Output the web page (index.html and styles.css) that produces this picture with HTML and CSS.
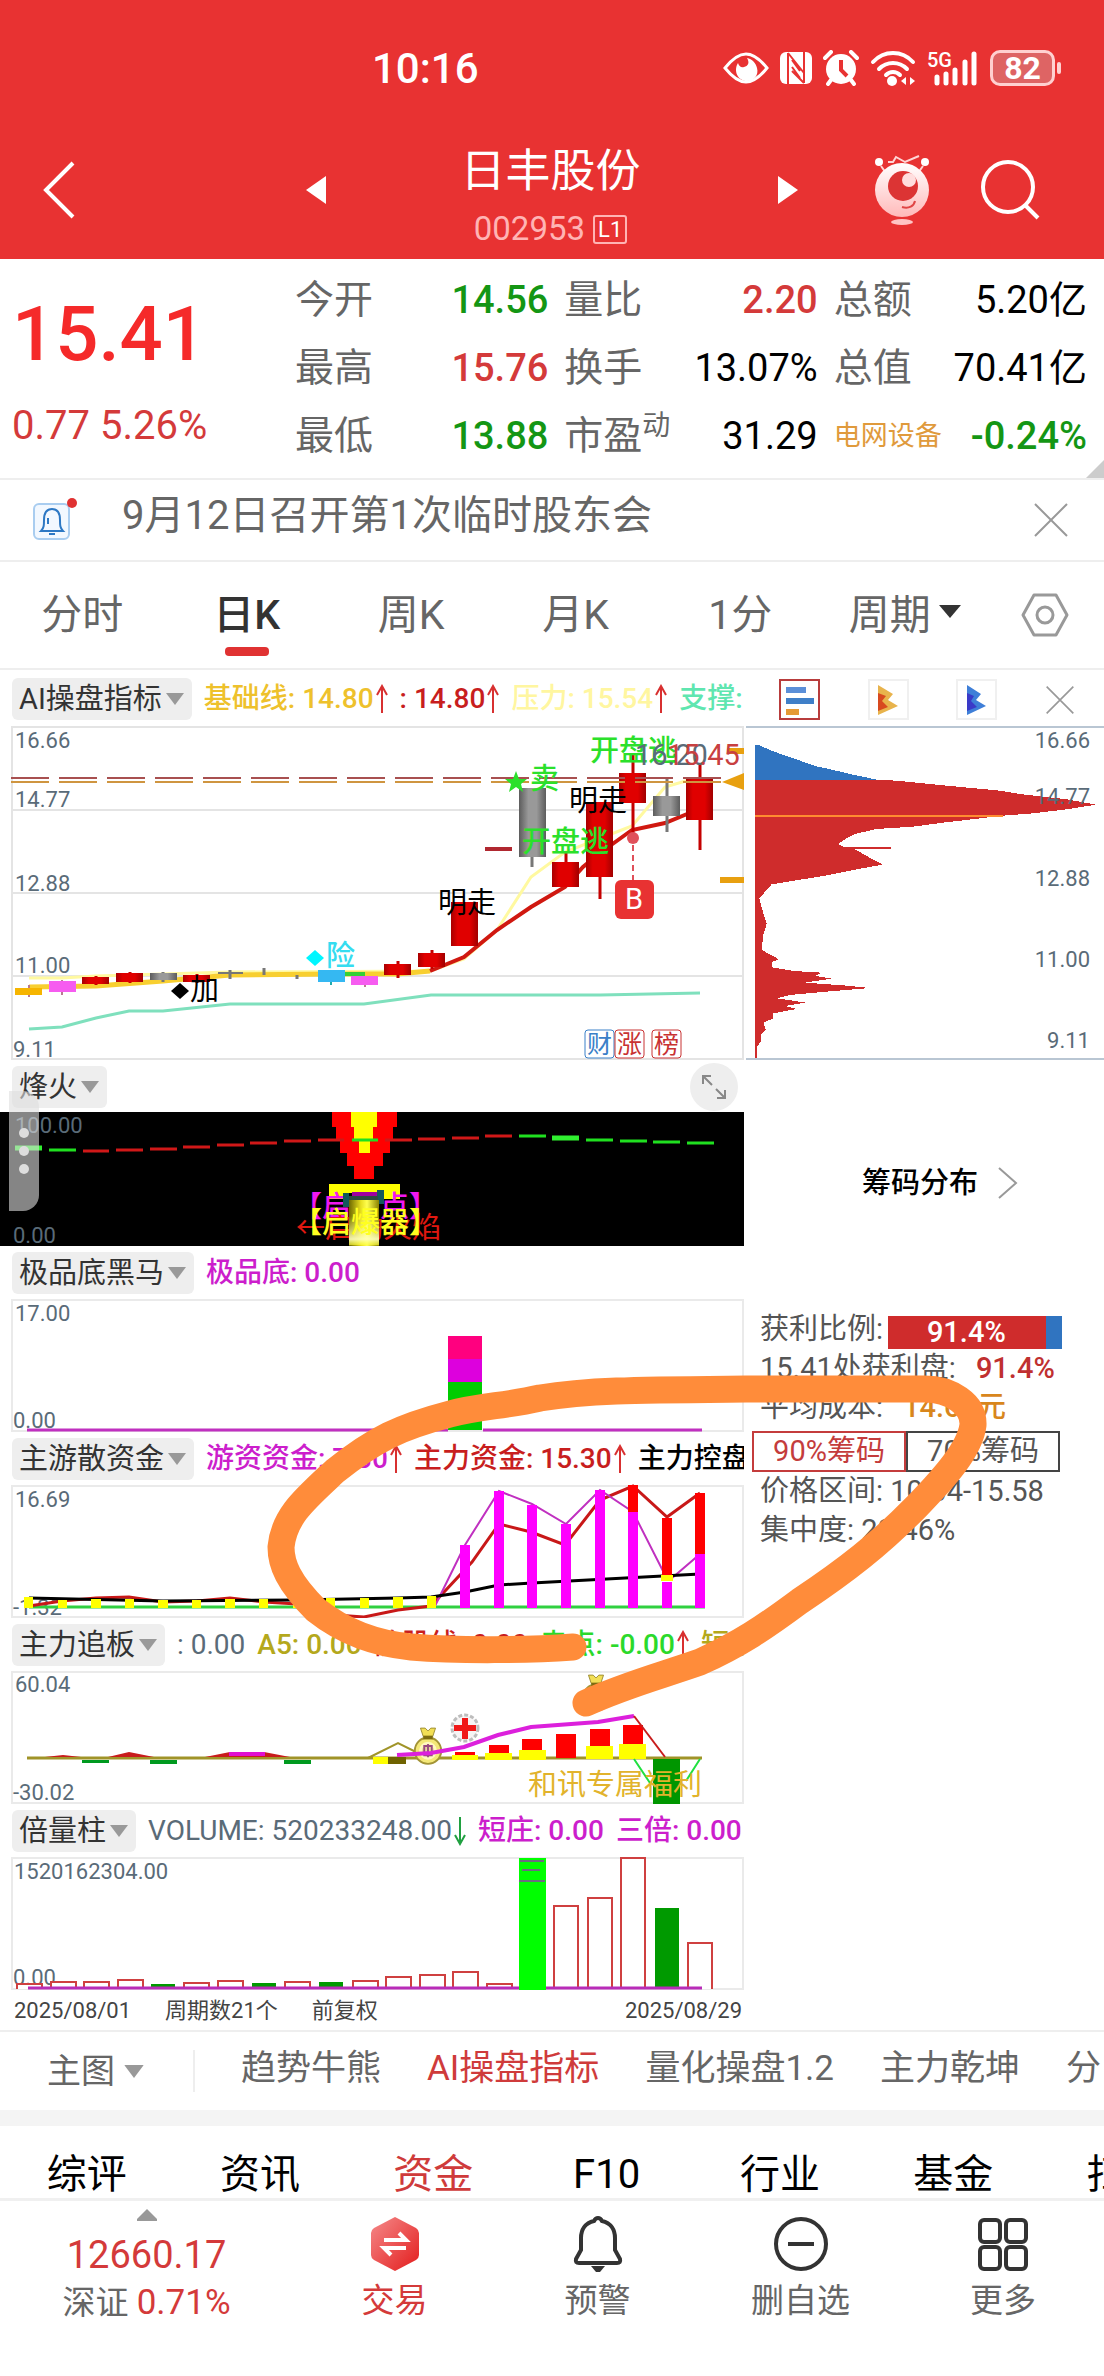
FILE: index.html
```html
<!DOCTYPE html>
<html lang="zh-CN">
<head>
<meta charset="utf-8">
<meta name="viewport" content="width=device-width, initial-scale=1">
<title>日丰股份 002953</title>
<link rel="stylesheet" href="styles.css">
</head>
<body>
<svg class="defs" aria-hidden="true">
  <defs>
    <linearGradient id="redBody"><stop offset="0" stop-color="#a80000"/><stop offset=".25" stop-color="#e00000"/><stop offset=".7" stop-color="#e00000"/><stop offset="1" stop-color="#a00000"/></linearGradient>
    <linearGradient id="greyBody"><stop offset="0" stop-color="#5c5c5c"/><stop offset=".35" stop-color="#999"/><stop offset=".65" stop-color="#999"/><stop offset="1" stop-color="#5c5c5c"/></linearGradient>
    <linearGradient id="rocket"><stop offset="0" stop-color="#6e6800"/><stop offset=".4" stop-color="#e8e020"/><stop offset=".6" stop-color="#ffff50"/><stop offset="1" stop-color="#8a8200"/></linearGradient>
    <linearGradient id="glow" x1="0" y1="0" x2="0" y2="1"><stop offset="0" stop-color="#ffff80" stop-opacity="0"/><stop offset=".8" stop-color="#ffffc0" stop-opacity=".9"/><stop offset="1" stop-color="#ffff40" stop-opacity=".6"/></linearGradient>
    <linearGradient id="tradeFill" x1="0" y1="0" x2="1" y2="1"><stop offset="0" stop-color="#f58a8a"/><stop offset="1" stop-color="#e31c1c"/></linearGradient>
    <linearGradient id="robotFill" x1="0" y1="0" x2="0" y2="1"><stop offset="0" stop-color="#fff"/><stop offset="1" stop-color="#ffb9b9"/></linearGradient>
    <symbol id="up" viewBox="0 0 12 30"><path d="M6 29V2M1 11 6 2l5 9" fill="none" stroke="currentColor" stroke-width="2"/></symbol>
    <symbol id="down" viewBox="0 0 12 30"><path d="M6 1v27M1 19l5 9 5-9" fill="none" stroke="currentColor" stroke-width="2"/></symbol>
    <symbol id="caret" viewBox="0 0 18 12"><path d="M0 0h18L9 12z" fill="currentColor"/></symbol>
    <symbol id="cross" viewBox="0 0 36 36"><path d="M2 2l32 32M34 2 2 34" fill="none" stroke="currentColor" stroke-width="2"/></symbol>
    <symbol id="bag" viewBox="0 0 34 40">
      <path d="M9 1h5l3 3 3-3h5l-3 9H12z" fill="#f2df55" stroke="#9a8a30"/>
      <circle cx="17" cy="25" r="14" fill="#f4e878" stroke="#a39436" stroke-width="2"/>
      <circle cx="17" cy="25" r="8" fill="#e8d9a0" stroke="#fff8c0" stroke-width="3"/>
      <path d="M12 9h10v4H12z" fill="#7d6c10"/>
      <path d="M13 20h8v10h-8zM17 18v14" fill="none" stroke="#9a4a80" stroke-width="2"/>
    </symbol>
  </defs>
</svg>

<header class="top">
  <div class="status">
    <time class="clock">10:16</time>
    <div class="status-icons">
      <svg width="46" height="36" viewBox="0 0 46 36" role="img" aria-label="护眼"><path d="M2 18C10 8 16 4 23 4s13 4 21 14C36 28 30 32 23 32S10 28 2 18z" fill="none" stroke="#fff" stroke-width="3"/><path d="M24 8c3 5 1 8-3 9-3 1-5-1-6-4-5 8 0 18 9 18 7 0 12-6 10-13-1-5-5-9-10-10z" fill="#fff"/></svg>
      <svg width="32" height="34" viewBox="0 0 32 34" role="img" aria-label="NFC"><rect y="1" width="32" height="32" rx="6" fill="#fff"/><path d="M8 2v31M24 1v31M12 9l8 11M12 16l8 11M8 2l16 20M12 20l12 12" fill="none" stroke="#e83232" stroke-width="2"/></svg>
      <svg width="36" height="36" viewBox="0 0 36 36" role="img" aria-label="闹钟"><circle cx="18" cy="19" r="15" fill="#fff"/><path d="M2 8l6-6M34 8l-6-6M8 30l-3 4M28 30l3 4" stroke="#fff" stroke-width="4" stroke-linecap="round"/><path d="M18 10v10l6 6" fill="none" stroke="#e83232" stroke-width="4"/></svg>
      <svg width="46" height="36" viewBox="0 0 46 36" role="img" aria-label="无线网络"><g fill="none" stroke="#fff" stroke-width="4" stroke-linecap="round"><path d="M3 12C14 0 32 0 43 12M9 19c8-8 20-8 28 0M16 25c4-4 10-4 14 0"/></g><circle cx="22" cy="31" r="5" fill="#fff"/><path d="M31 31l5-4v8zM45 31l-5-4v8z" fill="#fff"/></svg>
      <svg width="52" height="36" viewBox="0 0 52 36" role="img" aria-label="5G 信号"><text x="0" y="17" class="net">5G</text><path d="M10 33v-6M19 33v-9M28 33V20M38 33V12M47 33V4" stroke="#fff" stroke-width="5" stroke-linecap="round"/></svg>
      <span class="battery">82</span>
    </div>
  </div>
  <div class="titlebar">
    <button class="icon-btn" aria-label="返回"><svg width="32" height="58" viewBox="0 0 32 58"><path d="M30 2 3 29l27 27" fill="none" stroke="#fff" stroke-width="4"/></svg></button>
    <button class="icon-btn prev" aria-label="上一只"><svg width="20" height="28" viewBox="0 0 20 28"><path d="M20 0v28L0 14z" fill="#fff"/></svg></button>
    <div class="name">
      <h1>日丰股份</h1>
      <p>002953<span class="level">L1</span></p>
    </div>
    <button class="icon-btn next" aria-label="下一只"><svg width="20" height="28" viewBox="0 0 20 28"><path d="M0 0v28l20-14z" fill="#fff"/></svg></button>
    <button class="icon-btn robot" aria-label="助手"><svg width="58" height="72" viewBox="0 0 58 72"><path d="M8 12l5 7M50 12l-5 7M15 8h5l3-5 9 5 14-6" fill="none" stroke="#ffd5d5" stroke-width="2"/><circle cx="6" cy="8" r="4" fill="#fff"/><circle cx="52" cy="8" r="4" fill="#fff"/><circle cx="29" cy="36" r="27" fill="url(#robotFill)"/><circle cx="30" cy="32" r="15" fill="#dc3434"/><circle cx="36" cy="26" r="7" fill="#ffdede"/><path d="M29 53c7 2 12-1 13-6" fill="none" stroke="#e04545" stroke-width="2"/><ellipse cx="29" cy="68" rx="11" ry="3" fill="#ffc4c4"/></svg></button>
    <button class="icon-btn search" aria-label="搜索"><svg width="60" height="60" viewBox="0 0 60 60"><circle cx="27" cy="27" r="25" fill="none" stroke="#fff" stroke-width="4"/><path d="M44 45l13 13" stroke="#fff" stroke-width="4"/></svg></button>
  </div>
</header>

<main>
<section class="quote">
  <div class="price">
    <strong>15.41</strong>
    <span>0.77 5.26%</span>
  </div>
  <dl class="facts">
    <div><dt>今开</dt><dd class="down">14.56</dd></div>
    <div><dt>量比</dt><dd class="up">2.20</dd></div>
    <div><dt>总额</dt><dd>5.20亿</dd></div>
    <div><dt>最高</dt><dd class="up">15.76</dd></div>
    <div><dt>换手</dt><dd>13.07%</dd></div>
    <div><dt>总值</dt><dd>70.41亿</dd></div>
    <div><dt>最低</dt><dd class="down">13.88</dd></div>
    <div><dt>市盈<sup>动</sup></dt><dd>31.29</dd></div>
    <div><dt class="sector">电网设备</dt><dd class="down">-0.24%</dd></div>
  </dl>
</section>

<section class="notice">
  <svg width="44" height="44" viewBox="0 0 44 44" aria-hidden="true"><rect x="1" y="6" width="35" height="35" rx="5" fill="#f2f8ff" stroke="#a9cdf0" stroke-width="2"/><path d="M8 33c3-3 3-6 3-11 0-7 3-11 8-11s8 4 8 11c0 5 0 8 3 11zM16 36h6" fill="none" stroke="#2d78c4" stroke-width="2"/><path d="M15 20v6" stroke="#2d78c4" stroke-width="2"/><circle cx="39" cy="5" r="5" fill="#e03232"/></svg>
  <a href="#notice">9月12日召开第1次临时股东会</a>
  <button class="icon-btn grey" aria-label="关闭公告"><svg width="36" height="36"><use href="#cross"/></svg></button>
</section>

<nav class="periods" aria-label="周期">
  <button>分时</button>
  <button class="active">日K</button>
  <button>周K</button>
  <button>月K</button>
  <button>1分</button>
  <button>周期<svg class="dark" width="22" height="13" viewBox="0 0 18 12" preserveAspectRatio="none"><use href="#caret"/></svg></button>
  <button class="settings" aria-label="设置"><svg width="48" height="44" viewBox="0 0 48 44"><path d="M13 2h22l11 20-11 20H13L2 22z" fill="none" stroke="#999" stroke-width="3" stroke-linejoin="round"/><circle cx="24" cy="22" r="8" fill="none" stroke="#999" stroke-width="3"/></svg></button>
</nav>

<section class="charts">
<div class="panels">
  <div class="legend first">
    <button class="pill">AI操盘指标<svg width="18" height="12"><use href="#caret"/></svg></button>
    <span class="gold">基础线: 14.80<svg class="red"><use href="#up"/></svg></span>
    <span class="crimson">: 14.80<svg class="red"><use href="#up"/></svg></span>
    <span class="pale">压力: 15.54<svg class="red"><use href="#up"/></svg></span>
    <span class="mint">支撑:</span>
  </div>
  <svg class="plot" viewBox="0 724 744 336" role="img" aria-label="日K线">
    <path d="M12 727h731v332H12zM12 810h731M12 893h731M12 976h731" fill="none" stroke="#e4e4e4" stroke-width="2"/>
    <g class="axis"><text x="15" y="748">16.66</text><text x="15" y="807">14.77</text><text x="15" y="891">12.88</text><text x="15" y="973">11.00</text><text x="13" y="1057">9.11</text></g>
    <path d="M29 1029 62 1027 96 1018 129 1011H163L230 1004H364L431 995H600L700 993" fill="none" stroke="#7fe0bd" stroke-width="3"/>
    <path d="M29 978H62L96 976 230 972 430 971 464 959 497 930 531 877 565 852 632 826 665 787 689 780" fill="none" stroke="#fff9a0" stroke-width="3"/>
    <path d="M29 987 96 986 163 981 230 975 335 974H397L430 971" fill="none" stroke="#f8cf30" stroke-width="5"/>
    <path d="M430 971 464 957 497 930 531 907 565 887 583 867 600 853 632 830 665 823 692 812" fill="none" stroke="#d01810" stroke-width="4"/>
    <g stroke="#c40000" stroke-width="3"><path d="M96 976v9M130 972v11M197 974v9M398 961v17M432 950v19M566 852v12M600 870v29M633 755v80M700 763v87"/></g>
    <g stroke="#777" stroke-width="3"><path d="M163 972v10M532 850v17M667 778v54M230 970v9M264 968v7M297 975v4"/></g>
    <path d="M218 973h25" stroke="#777" stroke-width="2"/>
    <path d="M29 985v12M365 980v7M62 980v15" stroke="#b87a90" stroke-width="2"/>
    <rect x="15" y="988" width="27" height="7" fill="#f6b500"/>
    <rect x="49" y="981" width="27" height="11" fill="#f65cf0"/>
    <g fill="url(#redBody)"><rect x="82" y="977" width="27" height="7"/><rect x="116" y="973" width="27" height="9"/><rect x="183" y="975" width="27" height="7"/><rect x="384" y="964" width="27" height="11"/><rect x="418" y="953" width="27" height="14"/><rect x="451" y="902" width="27" height="44"/><rect x="552" y="862" width="27" height="25"/><rect x="586" y="802" width="27" height="75"/><rect x="619" y="773" width="27" height="30"/><rect x="686" y="778" width="27" height="42"/></g>
    <g fill="url(#greyBody)"><rect x="150" y="973" width="27" height="7"/><rect x="519" y="788" width="27" height="69"/><rect x="653" y="796" width="27" height="20"/></g>
    <path d="M331 980v5" stroke="#2aa" stroke-width="2"/>
    <rect x="318" y="970" width="27" height="12" fill="#35b8f2"/>
    <rect x="345" y="972" width="20" height="4" fill="#35d035"/>
    <rect x="351" y="976" width="27" height="9" fill="#f65cf0"/>
    <path d="M485 849h27" stroke="#b02830" stroke-width="4"/>
    <path d="M11 778h711" stroke="#a85050" stroke-width="2" stroke-dasharray="38 10"/>
    <path d="M11 782h711" stroke="#cf9540" stroke-width="2" stroke-dasharray="38 10"/>
    <g fill="#e8a010"><path d="M727 748h17v6h-17zM720 877h24v6h-24zM722 782l22-9v17z"/></g>
    <circle cx="633" cy="838" r="6" fill="#e0505a"/>
    <path d="M633 845v35" stroke="#e0505a" stroke-width="2" stroke-dasharray="6 4"/>
    <rect x="615" y="880" width="39" height="39" rx="6" fill="#e83232"/>
    <text x="634" y="909" class="mark" fill="#fff" text-anchor="middle">B</text>
    <g class="mark">
      <g class="strong" fill="#2be02b">
        <text x="590" y="761">开盘逃</text>
        <text x="530" y="789">卖</text>
        <text x="522" y="852">开盘逃</text>
      </g>
      <path d="M516 771l3 8h8l-6 5 2 8-7-5-7 5 2-8-6-5h8z" fill="#2be02b"/>
      <text x="569" y="811">明走</text><text x="438" y="913">明走</text>
      <path d="M315 950l9 8-9 8-9-8z" fill="#00f6ff"/><text x="326" y="966" fill="#35dcf0" class="strong">险</text>
      <path d="M180 983l9 8-9 8-9-8z"/><text x="190" y="1000">加</text>
      <text x="635" y="765" fill="#5a6b78">16.20</text><text x="667" y="765" fill="#c84040">15.45</text>
    </g>
    <g class="tag">
      <rect x="585" y="1030" width="29" height="28" rx="3" stroke="#3a80c8"/><text x="587" y="1053" fill="#3a80c8">财</text>
      <rect x="615" y="1030" width="29" height="28" rx="3" stroke="#c83232"/><text x="617" y="1053" fill="#c83232">涨</text>
      <rect x="652" y="1030" width="29" height="28" rx="3" stroke="#c83232"/><text x="654" y="1053" fill="#c83232">榜</text>
    </g>
  </svg>

  <div class="legend">
    <button class="pill">烽火<svg width="18" height="12"><use href="#caret"/></svg></button>
    <button class="expand" aria-label="全屏"><svg width="26" height="26" viewBox="0 0 26 26"><path d="M11 11 2 2M2 10V2h8M15 15l9 9M24 16v8h-8" fill="none" stroke="#888" stroke-width="2"/></svg></button>
  </div>
  <svg class="plot" viewBox="0 1112 744 134" role="img" aria-label="烽火指标">
    <path d="M0 1112h744v134H0z"/>
    <g class="axis"><text x="15" y="1133">100.00</text><text x="13" y="1243">0.00</text></g>
    <path d="M332 1112h65v15h-4v12h-3v14h-7v13h-9v13h-20v-13h-7v-13h-7v-14h-4v-12h-4z" fill="#f00"/>
    <path d="M351 1112h26v15h-4v12h-3v14h-11v-14h-5v-12h-3z" fill="#ff0"/>
    <g fill="none" stroke-width="3">
      <path d="M83 1151h26M116 1150h27M150 1149h27M183 1147h27M217 1145h27M250 1143h27M284 1141h27M318 1140h26M385 1140h27M418 1139h27M452 1138h27M485 1136h27" stroke="#d01818"/>
      <path d="M15 1148h27M49 1150h27M352 1140h26M519 1136h27M552 1138h27M586 1140h27M620 1141h27M653 1142h27M687 1143h27" stroke="#20e020"/>
      <path d="M15 1148h27M552 1138h27" stroke="#30f030" stroke-width="5"/>
    </g>
    <path d="M329 1184h71v15h-17v-6h-37v6h-17z" fill="#ff0"/>
    <g class="mark">
      <text x="293" y="1217" fill="#f018f0" class="strong">【启动点】</text>
      <text x="296" y="1238" fill="#e01810">←启动火焰</text>
    </g>
    <path d="M343 1193h6v14h-6zM377 1190h7v14h-7z" fill="#12595c"/>
    <path d="M352 1192h25v4h-25z" fill="#a000a0"/>
    <path d="M349 1196h29v4h-29z" fill="#2c4a40"/>
    <path d="M349 1200h30v46h-30z" fill="url(#rocket)"/>
    <path d="M349 1216h30v29h-30z" fill="url(#glow)"/>
    <text class="mark strong" x="293" y="1233" fill="#ffff20">【启爆器】</text>
  </svg>

  <div class="legend">
    <button class="pill">极品底黑马<svg width="18" height="12"><use href="#caret"/></svg></button>
    <span class="purple">极品底: 0.00</span>
  </div>
  <svg class="plot" viewBox="0 1298 744 134" role="img" aria-label="极品底黑马指标">
    <path d="M12 1300h731v131H12z" class="frame"/>
    <g class="axis"><text x="15" y="1321">17.00</text><text x="13" y="1428">0.00</text></g>
    <path d="M27 1430h421M483 1430h219" stroke="#c030c0" stroke-width="3"/>
    <path d="M448 1336h34v24h-34z" fill="#ff007f"/><path d="M448 1359h34v23h-34z" fill="#dd00dd"/><path d="M448 1382h34v48h-34z" fill="#00cc00"/>
  </svg>

  <div class="legend">
    <button class="pill">主游散资金<svg width="18" height="12"><use href="#caret"/></svg></button>
    <span class="purple">游资资金: 7.30<svg class="red"><use href="#up"/></svg></span>
    <span class="crimson">主力资金: 15.30<svg class="red"><use href="#up"/></svg></span>
    <span class="ink">主力控盘</span>
  </div>
  <svg class="plot" viewBox="0 1484 744 134" role="img" aria-label="主游散资金指标">
    <path d="M12 1486h731v131H12z" class="frame"/>
    <g class="axis"><text x="15" y="1507">16.69</text><text x="13" y="1615">-1.32</text></g>
    <path d="M29 1607h676" stroke="#30d040" stroke-width="3"/>
    <g fill="none" stroke-width="2">
      <path d="M29 1606 62 1601 96 1598 129 1597 163 1602 197 1601 230 1598 264 1602 297 1604 335 1615 364 1617 398 1610 431 1606 472 1562 499 1524 531 1532 565 1545 600 1500 633 1486 667 1517 700 1493" stroke="#c81818" stroke-width="3"/>
      <path d="M435 1606 465 1545 499 1491 532 1504 566 1524 600 1490 633 1512 665 1575 672 1578 700 1554" stroke="#c030c0"/>
      <path d="M29 1598 163 1601 297 1600 398 1598 431 1597 465 1592 499 1585 532 1583 700 1574" stroke="#000" stroke-width="3"/>
    </g>
    <path fill="#ff0" d="M24 1597h9v11h-9zM58 1600h9v8h-9zM91 1599h10v9H91zM125 1599h9v9h-9zM158 1600h10v8h-10zM192 1600h9v8h-9zM225 1599h10v9h-10zM259 1599h9v9h-9zM293 1599h9v9h-9zM326 1598h9v10h-9zM360 1598h9v10h-9zM393 1597h10v11h-10zM427 1596h9v12h-9z"/>
    <path fill="#f0f" d="M460 1545h10v63h-10zM494 1491h10v117h-10zM527 1505h10v103h-10zM561 1524h10v84h-10zM595 1490h10v118h-10zM628 1512h10v96h-10zM662 1582h10v26h-10zM695 1554h10v54h-10z"/>
    <path fill="#f00" d="M628 1485h10v27h-10zM662 1518h10v57h-10zM695 1493h10v61h-10z"/>
    <path fill="#ff0" d="M661 1575h12v6h-12z"/>
  </svg>

  <div class="legend">
    <button class="pill">主力追板<svg width="18" height="12"><use href="#caret"/></svg></button>
    <span class="slate">: 0.00</span>
    <span class="olive">A5: 0.00</span>
    <span class="crimson">散股线: 0.00</span>
    <span class="green">卖点: -0.00<svg class="red"><use href="#up"/></svg></span>
    <span class="olive">短线</span>
  </div>
  <svg class="plot" viewBox="0 1670 744 134" role="img" aria-label="主力追板指标">
    <path d="M12 1672h731v131H12z" class="frame"/>
    <g class="axis"><text x="15" y="1692">60.04</text><text x="13" y="1800">-30.02</text></g>
    <path d="M27 1758h675" stroke="#a09428" stroke-width="3"/>
    <path d="M45 1757l18-2 18 2zM108 1757l21-5 25 5zM205 1757l25-5h34l26 5z" fill="#c81c1c"/>
    <path d="M229 1754h36" stroke="#e010d0" stroke-width="4"/>
    <path d="M82 1760h27v3H82zM150 1760h27v4h-27zM284 1760h27v4h-27z" fill="#009a20"/>
    <path d="M368 1758 398 1743 416 1752" fill="none" stroke="#a09428" stroke-width="2"/>
    <path d="M373 1757h15v7h-15z" fill="#ff0"/><path d="M388 1757h18v7h-18z" fill="#6f6300"/>
    <path fill="#ff0" d="M452 1755h26v5h-26zM485 1753h27v7h-27zM519 1750h27v10h-27zM586 1746h27v13h-27zM619 1744h27v15h-27z"/>
    <path fill="#f00" d="M455 1752h20v3h-20zM489 1745h20v8h-20zM522 1739h20v11h-20zM556 1734h20v24h-20zM590 1729h20v17h-20zM623 1725h20v19h-20z"/>
    <use href="#bag" x="412" y="1726" width="32" height="40"/>
    <use href="#bag" x="580" y="1673" width="32" height="40"/>
    <circle cx="465" cy="1728" r="13" fill="#f6f4f4" stroke="#bdbdbd" stroke-width="3" stroke-dasharray="4 2"/>
    <path d="M465 1718v21M454 1728h22" stroke="#f01818" stroke-width="6"/>
    <path d="M397 1755 431 1753 464 1747 498 1735 531 1727 598 1722 634 1716" fill="none" stroke="#dc20dc" stroke-width="4"/>
    <path d="M634 1716 665 1757" stroke="#c81c1c" stroke-width="2"/>
    <path d="M653 1759h27v45h-27z" fill="#009600"/>
    <path d="M634 1759 650 1783M700 1759 686 1781" stroke="#20e040" stroke-width="2"/>
    <text class="mark" x="528" y="1795" fill="#e2b32c">和讯专属福利</text>
  </svg>

  <div class="legend">
    <button class="pill">倍量柱<svg width="18" height="12"><use href="#caret"/></svg></button>
    <span class="slate">VOLUME: 520233248.00<svg class="leaf"><use href="#down"/></svg></span>
    <span class="purple">短庄: 0.00</span>
    <span class="purple">三倍: 0.00</span>
  </div>
  <svg class="plot" viewBox="0 1856 744 134" role="img" aria-label="成交量">
    <path d="M12 1858h731v131H12z" class="frame"/>
    <g class="axis"><text x="14" y="1879">1520162304.00</text><text x="13" y="1985">0.00</text></g>
    <path d="M17 1989v-5h25v5M51 1989v-7h25v7M84 1989v-7h25v7M118 1989v-9h25v9M184 1989v-6h25v6M218 1989v-8h25v8M285 1989v-7h25v7M353 1989v-8h25v8M386 1989v-12h25v12M420 1989v-14h25v14M453 1989v-17h25v17M487 1989v-5h25v5M554 1989v-83h24v83M588 1989v-91h24v91M621 1989v-131h24v131M688 1989v-46h24v46" fill="#fff" stroke="#cf4040" stroke-width="2"/>
    <path d="M151 1984h24v5h-24zM252 1983h24v6h-24zM319 1982h24v7h-24zM655 1908h24v81h-24z" fill="#009a00"/>
    <path d="M519 1858h27v132h-27z" fill="#0f0"/>
    <path d="M520 1861h24M522 1870h18M519 1881h26" stroke="#6b6b80" stroke-width="2"/>
    <path d="M28 1988h491M546 1988h156" stroke="#b82cb8" stroke-width="3"/>
  </svg>
  <div class="dates"><span>2025/08/01</span><span>周期数21个</span><span>前复权</span><span>2025/08/29</span></div>
</div>

<aside class="chips">
  <div class="tools">
    <button class="tool on" aria-label="筹码"><svg width="30" height="30" viewBox="0 0 30 30"><path d="M1 2h20v6H1z" fill="#5b8fd8"/><path d="M1 13h28v6H1z" fill="#3f7fc8"/><path d="M1 24h13v6H1z" fill="#e59a35"/></svg></button>
    <button class="tool" aria-label="远期筹码"><svg width="22" height="32" viewBox="0 0 22 32"><path d="M1 1l15 9-5 6 10 6-20 9z" fill="#e8b34c"/><path d="M1 9l8 3-4 5 6 6-10 4z" fill="#d8491f"/></svg></button>
    <button class="tool" aria-label="近期筹码"><svg width="22" height="32" viewBox="0 0 22 32"><path d="M1 1l14 9-5 6 10 6-19 9z" fill="#3f7fd8"/><path d="M1 9l7 3-3 5 6 6-10 4z" fill="#3a3ac8"/></svg></button>
    <button class="icon-btn grey" aria-label="关闭筹码"><svg width="30" height="30"><use href="#cross"/></svg></button>
  </div>
  <svg class="plot" viewBox="744 724 360 336" role="img" aria-label="筹码分布图">
    <g transform="translate(700 670) scale(.3333)" shape-rendering="crispEdges">
      <path d="M164 226h15L210 240 250 255 300 272 345 288 400 300 450 312 535 330H164z" fill="#3074c0"/>
      <path d="M164 330H560L620 335 750 348 900 362 960 372 1100 388 1188 404 1100 418 1000 430 910 437 730 458 640 470 530 477 465 492 440 505 415 522 430 531H572V538H465L500 558 548 584 470 598 370 618 215 643 178 685 190 730 200 762 190 795 185 840 237 868 215 876V892L280 903 365 908 347 918 395 926 315 938 440 947 510 954 380 965 270 975 230 985 318 998 255 1008 290 1017 220 1030V1045L190 1058 198 1080 182 1095V1115L170 1132V1163H166V1130z" fill="#cf2c2c"/>
      <path d="M164 438h746" stroke="#ff8c30" stroke-width="6"/>
    </g>
    <path d="M746 727h358M746 1059h358" stroke="#b9c6d3" stroke-width="2"/>
    <g class="axis" text-anchor="end"><text x="1090" y="748">16.66</text><text x="1090" y="804">14.77</text><text x="1090" y="886">12.88</text><text x="1090" y="967">11.00</text><text x="1090" y="1048">9.11</text></g>
  </svg>
  <a class="chip-link" href="#chips">筹码分布<svg width="20" height="32" viewBox="0 0 20 32"><path d="M1 1l17 15L1 31" fill="none" stroke="#999" stroke-width="2"/></svg></a>
  <div class="chip-info">
    <p>获利比例:<span class="ratio"><b>91.4%</b></span></p>
    <p>15.41处获利盘:<b class="profit">91.4%</b></p>
    <p>平均成本:<b class="cost">14.60元</b></p>
    <div class="switch"><button class="on">90%筹码</button><button>70%筹码</button></div>
    <p>价格区间: 10.04-15.58</p>
    <p>集中度: 28.46%</p>
  </div>
</aside>

<div class="handle" aria-hidden="true"><i></i><i></i><i></i></div>
<svg class="doodle" viewBox="0 671 1104 1361" aria-hidden="true"><path d="M573 1648C530 1651 460 1652 411 1648 370 1644 340 1630 316 1611 288 1583 281 1565 281 1548 284 1517 305 1500 335 1472 375 1440 400 1428 450 1415 480 1407 505 1407 540 1399 590 1391 640 1391 746 1390H925C950 1390 974 1405 973 1426 970 1450 945 1478 917 1507 880 1545 845 1572 800 1602 765 1628 740 1645 700 1663 660 1677 625 1686 586 1704"/></svg>
</section>

<nav class="indicators" aria-label="指标">
  <button class="main-chart">主图<svg width="22" height="13" viewBox="0 0 18 12"><use href="#caret"/></svg></button>
  <button>趋势牛熊</button>
  <button class="active">AI操盘指标</button>
  <button>量化操盘1.2</button>
  <button>主力乾坤</button>
  <button>分</button>
</nav>

<nav class="sections" aria-label="资料">
  <a href="#a">综评</a><a href="#b">资讯</a><a href="#c" class="active">资金</a><a href="#d">F10</a><a href="#e">行业</a><a href="#f">基金</a><a href="#g">扫雷</a>
</nav>
</main>

<footer class="dock">
  <button class="index">
    <svg width="20" height="12" viewBox="0 0 20 12"><path d="M10 0l10 10v2H0v-2z" fill="#999"/></svg>
    <strong>12660.17</strong>
    <span>深证 <b>0.71%</b></span>
  </button>
  <button class="active"><svg width="56" height="56" viewBox="0 0 56 56"><path d="M28 1l21 11q3 2 3 5v22q0 3-3 5L28 55 7 44q-3-2-3-5V17q0-3 3-5z" fill="url(#tradeFill)"/><path d="M17 24h22l-7-7M39 32H17l7 7" fill="none" stroke="#fff" stroke-width="4"/></svg>交易</button>
  <button><svg width="56" height="56" viewBox="0 0 56 56"><path d="M28 2c2 0 3 1 4 3 9 2 13 9 13 17v12l5 9q1 4-3 4H9q-4 0-3-4l5-9V22c0-8 4-15 13-17 1-2 2-3 4-3z" fill="none" stroke="#333" stroke-width="4"/><path d="M21 50h14l-5 6h-4z" fill="#333"/></svg>预警</button>
  <button><svg width="56" height="56" viewBox="0 0 56 56"><circle cx="28" cy="28" r="25" fill="none" stroke="#333" stroke-width="4"/><path d="M15 28h26" stroke="#333" stroke-width="4"/></svg>删自选</button>
  <button><svg width="56" height="56" viewBox="0 0 56 56"><g fill="none" stroke="#333" stroke-width="4"><rect x="5" y="4" width="20" height="22" rx="4"/><rect x="31" y="4" width="20" height="22" rx="4"/><rect x="5" y="31" width="20" height="22" rx="4"/><rect x="31" y="31" width="20" height="22" rx="4"/></g></svg>更多</button>
</footer>
</body>
</html>
```
FILE: styles.css
```css
:root {
  --red: #e83232;
  --up: #d43a3a;
  --down: #149614;
  --text: #666;
  --line: #eee;
}
* { box-sizing: border-box; }
body {
  margin: 0;
  background: #fff;
  color: var(--text);
  font-family: Roboto, "Noto Sans CJK SC", sans-serif;
  overflow-x: hidden;
}
h1, p, dl, dd { margin: 0; font-weight: 400; }
button {
  margin: 0;
  padding: 0;
  border: 0;
  background: none;
  color: inherit;
  font: inherit;
  white-space: nowrap;
}
a { color: inherit; text-decoration: none; }
svg { display: block; flex: none; }
.defs { position: absolute; width: 0; height: 0; }

/* header */
.top { background: var(--red); color: #fff; }
.status {
  display: flex;
  align-items: center;
  justify-content: space-between;
  height: 136px;
  padding: 0 40px 0 372px;
}
.clock { font-size: 42px; font-weight: 500; }
.status-icons { display: flex; align-items: center; gap: 11px; }
.net { font-size: 20px; font-weight: 500; fill: #fff; }
.battery {
  position: relative;
  width: 65px;
  margin-right: 9px;
  border: 3px solid #ffd0d0;
  border-radius: 10px;
  background: #de6464;
  font-size: 32px;
  font-weight: 700;
  line-height: 30px;
  text-align: center;
}
.battery::after {
  content: "";
  position: absolute;
  top: 9px;
  right: -9px;
  width: 4px;
  height: 12px;
  border-radius: 2px;
  background: #ffd0d0;
}
.titlebar {
  display: grid;
  grid-template-columns: 32px 231fr 20px 452px 20px 75fr 58px 50px 60px;
  grid-template-rows: 107px;
  align-items: center;
  height: 123px;
  padding: 0 63px 16px 43px;
}
.prev { grid-column: 3; }
.name { grid-column: 4; align-self: start; padding: 7px 3px 0 0; text-align: center; }
.next { grid-column: 5; }
.robot { grid-column: 7; }
.search { grid-column: 9; }
.name h1 { font-size: 45px; line-height: 58px; }
.name p {
  display: flex;
  justify-content: center;
  align-items: center;
  gap: 8px;
  color: #ffb4b4;
  font-size: 33px;
  line-height: 56px;
}
.level {
  padding: 0 3px;
  border: 2px solid #ffb4b4;
  border-radius: 3px;
  color: #fff;
  font-size: 22px;
  line-height: 25px;
}
.icon-btn { display: block; }
.grey { color: #999; }

/* quote */
.quote {
  position: relative;
  display: flex;
  padding: 7px 17px 8px 12px;
  border-bottom: 2px solid var(--line);
}
.quote::after {
  content: "";
  position: absolute;
  right: 0;
  bottom: 0;
  border: 9px solid transparent;
  border-right-color: #ccc;
  border-bottom-color: #ccc;
}
.price { width: 283px; color: var(--up); }
.price strong {
  display: block;
  padding-top: 18px;
  color: #f52a2a;
  font-size: 76px;
  font-weight: 500;
  line-height: 100px;
}
.price span { font-size: 40px; line-height: 84px; }
.facts {
  flex: 1;
  display: grid;
  grid-template-columns: repeat(3, 1fr);
  column-gap: 16px;
}
.facts div { display: flex; justify-content: space-between; line-height: 68px; }
.facts dt { font-size: 39px; white-space: nowrap; }
.facts dd { color: #000; font-size: 38px; }
.facts sup { font-size: 28px; line-height: 28px; vertical-align: 14px; }
.facts dt.sector { color: #e09a3c; font-size: 27px; }
.facts dd.up { color: var(--up); font-weight: 500; }
.facts dd.down { color: var(--down); font-weight: 500; }

/* notice */
.notice {
  display: flex;
  align-items: center;
  height: 82px;
  padding: 0 35px 0 33px;
  border-bottom: 2px solid var(--line);
}
.notice a { flex: 1; padding: 0 0 8px 45px; font-size: 40px; line-height: 50px; }

/* period tabs */
.periods {
  display: grid;
  grid-template-columns: repeat(6, 149fr) 106fr;
  height: 108px;
  border-bottom: 2px solid var(--line);
  font-size: 41px;
}
.periods button {
  position: relative;
  display: flex;
  align-items: center;
  justify-content: center;
  gap: 8px;
  padding-bottom: 8px;
}
.periods .settings { padding-bottom: 0; }
.periods .active { color: #333; font-weight: 500; }
.periods .active::after {
  content: "";
  position: absolute;
  bottom: 12px;
  width: 44px;
  height: 9px;
  border-radius: 4px;
  background: #e03232;
}
.dark { color: #333; }

/* charts */
.charts {
  position: relative;
  display: grid;
  grid-template-columns: 744fr 360fr;
  border-bottom: 2px solid var(--line);
}
.panels, .chips { min-width: 0; }
.plot { width: 100%; height: auto; }
.frame { fill: none; stroke: #eaeaea; stroke-width: 2; }
.axis text { fill: #5a6b78; font-size: 22px; }
.mark, .mark text { font-size: 29px; }
.strong { font-weight: 500; }
.tag rect { fill: #fff; stroke-width: 1; }
.tag text { font-size: 25px; }
.legend {
  display: flex;
  align-items: center;
  gap: 12px;
  height: 52px;
  padding: 2px 0 0 12px;
  overflow: hidden;
  font-size: 28px;
  font-weight: 500;
  line-height: 42px;
  white-space: nowrap;
}
.legend.first { height: 54px; padding-top: 4px; }
.legend span { display: flex; align-items: center; gap: 2px; white-space: pre; }
.legend span svg { width: 12px; height: 30px; }
.pill {
  flex: none;
  display: flex;
  align-items: center;
  gap: 4px;
  padding: 0 8px 0 7px;
  border-radius: 6px;
  background: #eee;
  color: #333;
  font-size: 29px;
  font-weight: 400;
}
.pill svg { color: #999; }
.expand {
  display: grid;
  place-items: center;
  width: 48px;
  height: 48px;
  margin: 0 6px 0 auto;
  border-radius: 50%;
  background: #eee;
}
.gold { color: #eec12c; }
.crimson { color: #c81e1e; }
.red { color: #d83030; }
.pale { color: #fff6a0; }
.mint { color: #5fe6b0; }
.purple { color: #cc1ecc; }
.ink { color: #000; }
.slate { color: #5a6b78; }
.olive { color: #b4a81c; }
.green { color: #2bd92b; }
.leaf { color: #20a040; }
.slate { font-weight: 400; }
.dates {
  display: flex;
  gap: 34px;
  padding: 1px 2px 0 14px;
  color: #444;
  font-size: 22px;
  line-height: 39px;
}
.dates span:last-child { margin-left: auto; }

/* chip distribution */
.tools {
  display: flex;
  align-items: center;
  justify-content: space-between;
  height: 54px;
  padding: 5px 29px 0 35px;
}
.tool {
  display: grid;
  place-items: center;
  width: 41px;
  height: 41px;
  border: 2px solid #f0f0f0;
}
.tool.on { border-color: #b83c3c; }
.chip-link {
  display: flex;
  align-items: center;
  gap: 20px;
  padding: 102px 0 0 118px;
  color: #000;
  font-size: 29px;
  font-weight: 500;
  line-height: 42px;
}
.chip-info {
  padding: 106px 42px 0 16px;
  color: #555;
  font-size: 29px;
  line-height: 39px;
}
.chip-info p { display: flex; align-items: center; white-space: pre; }
.chip-info b { font-weight: 500; }
.ratio {
  flex: 1;
  height: 33px;
  margin: 6px 0 0 5px;
  background: linear-gradient(90deg, #cf2c2c 91%, #3074c0 91%);
  color: #fff;
  line-height: 33px;
}
.ratio b { display: block; width: 90%; text-align: center; }
.profit { margin-left: 20px; color: #c03030; }
.cost { margin-left: 20px; color: #d8861c; }
.switch { display: flex; margin: 4px 2px 0 -8px; }
.switch button { flex: 1; border: 2px solid #444; line-height: 37px; }
.switch .on { border-color: #c43c3c; color: #c43c3c; }

/* floating handle and hand-drawn loop over the charts */
.handle {
  position: absolute;
  top: 421px;
  left: 9px;
  display: flex;
  flex-direction: column;
  align-items: center;
  justify-content: center;
  gap: 8px;
  width: 30px;
  height: 120px;
  border-radius: 0 16px 16px 0;
  background: rgba(222, 222, 222, .6);
}
.handle i { width: 10px; height: 10px; border-radius: 50%; background: #ddd; }
.doodle { position: absolute; top: 0; left: 0; width: 100%; pointer-events: none; }
.doodle path {
  fill: none;
  stroke: #ff8c3a;
  stroke-width: 27;
  stroke-linecap: round;
  stroke-linejoin: round;
}

/* indicator and section tabs */
.indicators {
  display: flex;
  align-items: center;
  gap: 46px;
  height: 94px;
  padding-left: 47px;
  overflow: hidden;
  border-bottom: 16px solid #f4f4f4;
  font-size: 35px;
  line-height: 42px;
}
.indicators button { padding-bottom: 4px; }
.indicators .active, .sections .active { color: #cf3b3b; }
.indicators .main-chart {
  display: flex;
  align-items: center;
  gap: 8px;
  padding: 0 48px 0 0;
  border-right: 2px solid #eee;
  font-size: 34px;
}
.main-chart svg { color: #999; }
.sections {
  display: flex;
  overflow: hidden;
  border-bottom: 3px solid #f0f0f0;
  color: #000;
  font-size: 40px;
  line-height: 46px;
}
.sections a {
  flex: 0 0 15.7%;
  padding: 26px 0 0;
  text-align: center;
}

/* bottom dock */
.dock {
  display: grid;
  grid-template-columns: 293fr 203fr 203fr 203fr 202fr;
  padding-bottom: 40px;
  font-size: 33px;
}
.dock button {
  display: flex;
  flex-direction: column;
  align-items: center;
  padding-top: 15px;
  line-height: 58px;
}
.dock .index { padding-top: 8px; line-height: 48px; }
.dock strong { padding-top: 10px; color: var(--up); font-size: 38px; font-weight: 400; }
.dock b { color: var(--up); font-size: 35px; font-weight: 400; }
.dock .active { color: var(--up); }
```
